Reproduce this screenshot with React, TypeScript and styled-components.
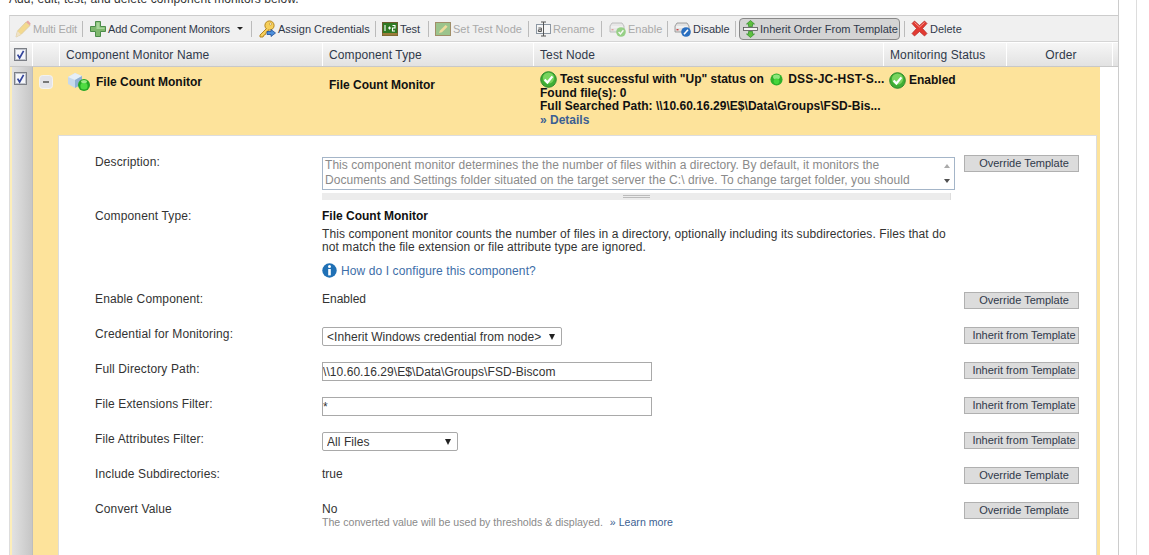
import React from 'react';
import styled, { createGlobalStyle } from 'styled-components';

const GlobalStyle = createGlobalStyle`
  html, body {
    margin: 0;
    padding: 0;
    height: 555px;
    overflow: hidden;
    background: #fff;
    font-family: "Liberation Sans", Arial, sans-serif;
    font-size: 12px;
    color: #222;
  }
`;

const Page = styled.div`
  width: 1149px;
  height: 555px;
  overflow: hidden;
  display: flex;
  box-sizing: border-box;
`;

const Main = styled.div`
  width: 1119px;
  padding-left: 9px;
  box-sizing: border-box;
  border-right: 1px solid #ccc;
  flex: none;
`;

const Aside = styled.div`
  width: 18px;
  box-sizing: border-box;
  border-right: 1px solid #ddd;
  flex: none;
`;

const Intro = styled.div`
  height: 15px;
  margin-top: -8px;
  line-height: 14px;
  font-size: 12px;
  letter-spacing: 0.08px;
  color: #333;
`;

const Panel = styled.div`
  margin-top: 8px;
  border-top: 1px solid #ccc;
  border-left: 1px solid #ddd;
  box-sizing: border-box;
`;

const Toolbar = styled.div`
  height: 26px;
  box-sizing: border-box;
  background: #f0f0f0;
  border-bottom: 1px solid #d5d5d5;
  display: flex;
  align-items: center;
  padding-left: 5px;
  font-size: 11px;
`;

const ToolItem = styled.div<{ $off?: boolean; $w: number }>`
  display: flex;
  align-items: center;
  gap: 2px;
  width: ${p => p.$w}px;
  flex: none;
  color: ${p => (p.$off ? '#a9a9a9' : '#30394a')};
  white-space: nowrap;
`;

const ToolButton = styled.div`
  display: flex;
  align-items: center;
  gap: 2px;
  width: 161px;
  height: 22px;
  box-sizing: border-box;
  flex: none;
  padding-left: 3px;
  border: 1px solid #888;
  border-radius: 4px;
  background: #d4d4d4;
  color: #30394a;
  white-space: nowrap;
`;

const ToolSep = styled.div<{ $l: number; $r: number }>`
  width: 1px;
  height: 16px;
  background: #bbb;
  flex: none;
  margin: 0 ${p => p.$r}px 0 ${p => p.$l}px;
`;

const TightLabel = styled.span`
  letter-spacing: -0.13px;
`;

const Caret = styled.span`
  width: 0;
  height: 0;
  margin-left: 5px;
  border-left: 3px solid transparent;
  border-right: 3px solid transparent;
  border-top: 3px solid #222;
`;

const HeaderRow = styled.div`
  height: 24px;
  box-sizing: border-box;
  display: flex;
  margin-top: 1px;
  background: linear-gradient(#f6f6f6, #e2e2e2);
  border-bottom: 1px solid #c8c8c8;
`;

const HeadCell = styled.div<{ $w: number; $center?: boolean }>`
  width: ${p => p.$w}px;
  flex: none;
  box-sizing: border-box;
  display: flex;
  align-items: center;
  justify-content: ${p => (p.$center ? 'center' : 'flex-start')};
  padding-left: ${p => (p.$center ? 3 : 6)}px;
  border-right: 1px solid #fff;
  color: #30394a;
  letter-spacing: 0.12px;
`;

const CheckHeadCell = styled(HeadCell)`
  padding-left: 4px;
`;

const RowBody = styled.div`
  display: flex;
  height: 488px;
`;

const SideCell = styled.div`
  width: 23px;
  flex: none;
  box-sizing: border-box;
  padding: 5px 0 0 2px;
  border-left: 2px solid #fdeeb9;
  border-right: 1px solid #bdbdbd;
  background: linear-gradient(to right, #e2e2e2, #c6c6c6);
`;

const YellowArea = styled.div`
  width: 1067px;
  flex: none;
  background: #fde39b;
  display: flex;
  flex-direction: column;
`;

const Summary = styled.div`
  height: 68px;
  flex: none;
  display: flex;
  color: #111;
`;

const Cell = styled.div<{ $w: number }>`
  width: ${p => p.$w}px;
  flex: none;
  box-sizing: border-box;
`;

const ExpandCell = styled(Cell)`
  padding: 8px 0 0 6px;
`;

const NameCell = styled(Cell)`
  display: flex;
  align-items: flex-start;
  padding: 6px 0 0 7px;
  gap: 5px;
  font-weight: bold;
  line-height: 18px;
`;

const TypeCell = styled(Cell)`
  padding: 11px 0 0 6px;
  font-weight: bold;
  line-height: 14px;
`;

const NodeCell = styled(Cell)`
  padding: 5px 0 0 6px;
  font-weight: bold;
  line-height: 13px;
`;

const StatusCell = styled(Cell)`
  display: flex;
  gap: 3px;
  padding: 5px 0 0 5px;
  font-weight: bold;
  line-height: 17px;
`;

const NodeLine = styled.div`
  display: flex;
  align-items: center;
  gap: 3px;
  height: 15px;
  white-space: pre;
`;

const NodeName = styled.span`
  margin-left: 2px;
  letter-spacing: 0.2px;
`;

const NodeText = styled.div`
  white-space: nowrap;
  letter-spacing: 0.03px;
`;

const DetailsLink = styled.div`
  color: #3c5f93;
  margin-top: 1px;
`;

const DetailPanel = styled.div`
  margin-left: 25px;
  width: 1039px;
  flex: 1;
  box-sizing: border-box;
  background: #fff;
  border: 1px solid #ddd;
  border-bottom: none;
  padding: 13px 0 0 36px;
  color: #333;
`;

const FormRow = styled.div<{ $h: number }>`
  display: grid;
  grid-template-columns: 227px 642px 115px;
  align-items: start;
  height: ${p => p.$h}px;
`;

const Label = styled.div`
  line-height: 14px;
  padding-top: 6px;
  letter-spacing: 0.13px;
`;

const PlainValue = styled.div`
  line-height: 14px;
  padding-top: 6px;
`;

const OverrideButton = styled.button`
  width: 115px;
  height: 17px;
  margin-top: 6px;
  padding: 0 0 2px 5px;
  box-sizing: border-box;
  background: #dcdcdc;
  border: 1px solid #b0b0b0;
  font: 11px "Liberation Sans", Arial, sans-serif;
  color: #30394a;
  text-align: center;
  white-space: nowrap;
`;

const DescriptionBox = styled.div`
  width: 633px;
  height: 33px;
  box-sizing: border-box;
  border: 1px solid #a4b5c8;
  display: flex;
  margin-top: 8px;
`;

const DescriptionText = styled.div`
  flex: 1;
  padding: 0 0 0 2px;
  color: #8a8a8a;
  line-height: 15px;
  letter-spacing: 0.06px;
  overflow: hidden;
`;

const ScrollColumn = styled.div`
  width: 15px;
  flex: none;
  display: flex;
  flex-direction: column;
  align-items: center;
  justify-content: space-between;
  padding: 6px 0 6px;
  box-sizing: border-box;
`;

const ScrollUp = styled.span`
  border-left: 3px solid transparent;
  border-right: 3px solid transparent;
  border-bottom: 4px solid #aaa;
`;

const ScrollDown = styled.span`
  border-left: 3px solid transparent;
  border-right: 3px solid transparent;
  border-top: 4px solid #505050;
`;

const Resizer = styled.div`
  width: 629px;
  height: 7px;
  margin-top: 3px;
  background: #ececec;
  border-right: 1px solid #ddd;
  box-sizing: border-box;
  display: flex;
  align-items: center;
  justify-content: center;
`;

const Grip = styled.div`
  width: 27px;
  height: 3px;
  border-top: 1px solid #bbb;
  border-bottom: 1px solid #bbb;
  box-sizing: border-box;
`;

const TypeTitle = styled.div`
  font-weight: bold;
  color: #111;
  line-height: 14px;
  padding-top: 6px;
`;

const TypeText = styled.div`
  margin-top: 5px;
  width: 630px;
  line-height: 13px;
  letter-spacing: 0.08px;
  color: #333;
`;

const HelpLink = styled.div`
  margin-top: 9px;
  display: flex;
  align-items: center;
  gap: 4px;
  color: #3d6ea8;
  line-height: 14px;
  letter-spacing: 0.1px;
`;

const SelectWrap = styled.div<{ $w: number }>`
  position: relative;
  width: ${p => p.$w}px;
  height: 19px;
  margin-top: 6px;
`;

const Select = styled.select`
  appearance: none;
  width: 100%;
  height: 100%;
  box-sizing: border-box;
  padding: 0 0 0 4px;
  border: 1px solid #a9a9a9;
  border-radius: 2px;
  background: #fff;
  font: 12px "Liberation Sans", Arial, sans-serif;
  letter-spacing: 0.06px;
  color: #333;
`;

const SelectArrow = styled.span`
  position: absolute;
  right: 7px;
  top: 7px;
  border-left: 3px solid transparent;
  border-right: 3px solid transparent;
  border-top: 6px solid #222;
`;

const TextInput = styled.input`
  width: 330px;
  height: 19px;
  margin-top: 6px;
  box-sizing: border-box;
  padding: 0;
  border: 1px solid #a9a9a9;
  outline: none;
  font: 12px "Liberation Sans", Arial, sans-serif;
  letter-spacing: 0.06px;
  color: #333;
`;

const Note = styled.div`
  font-size: 10.6px;
  color: #8a8a8a;
  line-height: 13px;
  white-space: nowrap;
`;

const NoteLink = styled.span`
  color: #3c5f93;
  margin-left: 4px;
`;

const CheckIcon = () => (
  <svg width="13" height="13" viewBox="0 0 13 13" style={{ display: 'block' }}>
    <rect x="0.5" y="0.5" width="12" height="12" fill="#e9ebf0" stroke="#7c7f86" />
    <rect x="1.5" y="1.5" width="10" height="10" fill="#f6f7fa" stroke="#c0c4cc" />
    <path d="M3.6 6.6 L5.6 10 L9.6 2.8" fill="none" stroke="#33459c" strokeWidth="1.7" />
  </svg>
);

const MinusIcon = () => (
  <svg width="14" height="14" viewBox="0 0 14 14" style={{ display: 'block' }}>
    <rect x="0.5" y="0.5" width="13" height="13" rx="3" fill="#e4e4e8" stroke="#f2f2f2" />
    <rect x="4" y="6" width="6" height="2" fill="#777" />
  </svg>
);

const GreenCheck = () => (
  <svg width="17" height="17" viewBox="0 0 17 17" style={{ flex: 'none' }}>
    <circle cx="8.5" cy="8.5" r="7.8" fill="#3fae34" stroke="#2b8a2c" />
    <circle cx="8.5" cy="7" r="5.6" fill="#79d45f" />
    <path d="M4.6 8.5 L7.4 11.5 L12.4 5.4" fill="none" stroke="#fff" strokeWidth="2.2" />
  </svg>
);

const GreenBall = () => (
  <svg width="13" height="13" viewBox="0 0 12 12" style={{ flex: 'none' }}>
    <circle cx="6" cy="6" r="5.6" fill="#2fb12c" />
    <ellipse cx="6" cy="3.6" rx="3.2" ry="2.2" fill="#8fe67c" />
    <circle cx="6" cy="7.6" r="2.6" fill="#45d63a" />
  </svg>
);

const MonitorIcon = () => (
  <svg width="24" height="20" viewBox="0 0 24 20" style={{ flex: 'none', marginTop: -1 }}>
    <path d="M1 5 L8 1 L15 4 L15 12 L8 16 L1 12 Z" fill="#c6d9ec" />
    <path d="M1 5 L8 1 L15 4 L8 8 Z" fill="#e6eff8" />
    <path d="M8 8 L15 4 L15 12 L8 16 Z" fill="#8fb0d2" />
    <circle cx="17" cy="13" r="6" fill="#24a724" />
    <circle cx="17" cy="14" r="3.6" fill="#4fdc42" />
    <ellipse cx="17" cy="9.6" rx="3" ry="1.6" fill="#9bea87" />
  </svg>
);

const InfoIcon = () => (
  <svg width="15" height="15" viewBox="0 0 15 15" style={{ flex: 'none' }}>
    <circle cx="7.5" cy="7.5" r="7.2" fill="#1f70b5" />
    <circle cx="7.5" cy="3.6" r="1.5" fill="#fff" />
    <rect x="6.2" y="6" width="2.6" height="6.4" fill="#fff" />
  </svg>
);

const PencilIcon = () => (
  <svg width="16" height="18" viewBox="0 0 16 18" style={{ flex: 'none' }}>
    <path d="M1 17 L2.5 11 L11 2 L15 5.5 L6 14.5 Z" fill="#f3d98e" stroke="#d8c8a0" strokeWidth="0.8" />
    <path d="M11 2 L13 0.6 L15.6 3.4 L15 5.5 Z" fill="#e8a6a0" />
    <path d="M1 17 L2.5 11 L6 14.5 Z" fill="#efe2c6" />
  </svg>
);

const PlusIcon = () => (
  <svg width="16" height="16" viewBox="0 0 16 16" style={{ flex: 'none' }}>
    <path d="M5.5 0.5 H10.5 V5.5 H15.5 V10.5 H10.5 V15.5 H5.5 V10.5 H0.5 V5.5 H5.5 Z" fill="#7fb86e" stroke="#4c8c4a" />
    <path d="M6.5 1.5 H9.5 V6.5 H14.5 V8 H6.5 Z" fill="#a8d59a" />
  </svg>
);

const KeyIcon = () => (
  <svg width="17" height="18" viewBox="0 0 17 18" style={{ flex: 'none' }}>
    <circle cx="10.5" cy="5.5" r="4.6" fill="#f6cf5a" stroke="#b5851f" />
    <circle cx="11.5" cy="4" r="1.1" fill="#fff" stroke="#b5851f" strokeWidth="0.6" />
    <path d="M7.5 8.5 L1 15 L1 17 L4 17 L5 15 L6.5 14.5 L7 12.5 L10 9.8" fill="#f6cf5a" stroke="#b5851f" />
    <path d="M8 11.5 H12 V9.5 L16.5 13 L12 16.5 V14.5 H8 Z" fill="#4c8fdc" stroke="#1f4f96" strokeWidth="0.8" />
  </svg>
);

const BoardIcon = () => (
  <svg width="16" height="14" viewBox="0 0 16 14" style={{ flex: 'none' }}>
    <rect x="0.5" y="0.5" width="15" height="13" fill="#2f7a22" stroke="#6b5a2c" />
    <rect x="0.5" y="11" width="15" height="2.5" fill="#9c7c3a" />
    <path d="M3 3 V9 M6 6 H9 M7.5 4.5 V7.5 M10.5 3.5 H13 V6 H10.5 V9 H13" fill="none" stroke="#fff" strokeWidth="1.1" />
  </svg>
);

const SetNodeIcon = () => (
  <svg width="16" height="14" viewBox="0 0 16 14" style={{ flex: 'none' }}>
    <rect x="0.5" y="0.5" width="15" height="13" fill="#9cc48c" stroke="#a08e68" />
    <path d="M4 11 L5 8.4 L10.6 3 L12.6 4.8 L7 10.2 Z" fill="#f0dc9c" />
  </svg>
);

const RenameIcon = () => (
  <svg width="15" height="16" viewBox="0 0 15 16" style={{ flex: 'none' }}>
    <rect x="0.5" y="3.5" width="14" height="9" fill="#f5f5f5" stroke="#8c97a3" />
    <path d="M7.5 1 V15 M5 1 H10 M5 15 H10" stroke="#555" fill="none" />
    <path d="M2.4 7 H5.4 V10.5 H2.4 V8.8 H5" stroke="#555" fill="none" />
  </svg>
);

const ServerIcon = ({ enable }: { enable?: boolean }) => (
  <svg width="17" height="16" viewBox="0 0 17 16" style={{ flex: 'none', opacity: enable ? 0.6 : 1 }}>
    <path d="M1 5 L3 2 H13 L15 5 V11 H1 Z" fill="#e2e2e2" stroke="#8c8c8c" strokeWidth="0.8" />
    <rect x="2" y="5.5" width="12" height="1" fill="#fff" />
    <rect x="2.5" y="8" width="2" height="1.4" fill={enable ? '#d86a6a' : '#c44'} />
    {enable ? (
      <>
        <circle cx="12" cy="11" r="4.8" fill="#5cbb40" />
        <path d="M9.6 11 L11.4 13 L14.4 9.2" fill="none" stroke="#fff" strokeWidth="1.4" />
      </>
    ) : (
      <>
        <circle cx="12" cy="11" r="4.8" fill="#2a6fc0" />
        <path d="M10 13.2 L14 8.8" fill="none" stroke="#fff" strokeWidth="1.6" />
      </>
    )}
  </svg>
);

const OrderIcon = () => (
  <svg width="15" height="18" viewBox="0 0 15 18" style={{ flex: 'none' }}>
    <path d="M7.5 0.5 L11.5 4 H9.5 V6.5 H5.5 V4 H3.5 Z" fill="#5fc03f" stroke="#2f8a2a" strokeWidth="0.7" />
    <path d="M7.5 17.5 L11.5 14 H9.5 V11.5 H5.5 V14 H3.5 Z" fill="#5fc03f" stroke="#2f8a2a" strokeWidth="0.7" />
    <rect x="0.5" y="7.5" width="14" height="3" fill="#f4f4f4" stroke="#555" strokeWidth="0.8" />
  </svg>
);

const DeleteIcon = () => (
  <svg width="17" height="17" viewBox="0 0 17 17" style={{ flex: 'none' }}>
    <path d="M1 3.5 L3.5 1 L8.5 5.5 L13.5 1 L16 3.5 L11.5 8.5 L16 13.5 L13.5 16 L8.5 11.5 L3.5 16 L1 13.5 L5.5 8.5 Z" fill="#e23a32" stroke="#b02a26" strokeWidth="0.7" />
    <path d="M3.5 2.5 L8.5 7 L13.5 2.5" fill="none" stroke="#f79a90" />
  </svg>
);

const App = () => {
  return (
    <Page>
      <GlobalStyle />
      <Main>
        <Intro>Add, edit, test, and delete component monitors below.</Intro>
        <Panel>
          <Toolbar>
            <ToolItem $off $w={67}><PencilIcon /><TightLabel>Multi Edit</TightLabel></ToolItem>
            <ToolSep $l={0} $r={7} />
            <ToolItem $w={161}><PlusIcon /><TightLabel>Add Component Monitors</TightLabel><Caret /></ToolItem>
            <ToolSep $l={0} $r={7} />
            <ToolItem $w={116}><KeyIcon />Assign Credentials</ToolItem>
            <ToolSep $l={0} $r={6} />
            <ToolItem $w={46}><BoardIcon />Test</ToolItem>
            <ToolSep $l={0} $r={6} />
            <ToolItem $off $w={93}><SetNodeIcon />Set Test Node</ToolItem>
            <ToolSep $l={0} $r={7} />
            <ToolItem $off $w={65}><RenameIcon />Rename</ToolItem>
            <ToolSep $l={0} $r={7} />
            <ToolItem $off $w={58}><ServerIcon enable />Enable</ToolItem>
            <ToolSep $l={0} $r={6} />
            <ToolItem $w={61}><ServerIcon />Disable</ToolItem>
            <ToolSep $l={0} $r={3} />
            <ToolButton><OrderIcon />Inherit Order From Template</ToolButton>
            <ToolSep $l={4} $r={6} />
            <ToolItem $w={60}><DeleteIcon />Delete</ToolItem>
          </Toolbar>
          <HeaderRow>
            <CheckHeadCell $w={23}><CheckIcon /></CheckHeadCell>
            <HeadCell $w={27} />
            <HeadCell $w={263}>Component Monitor Name</HeadCell>
            <HeadCell $w={211}>Component Type</HeadCell>
            <HeadCell $w={350}>Test Node</HeadCell>
            <HeadCell $w={123}>Monitoring Status</HeadCell>
            <HeadCell $w={106} $center>Order</HeadCell>
          </HeaderRow>
          <RowBody>
            <SideCell><CheckIcon /></SideCell>
            <YellowArea>
              <Summary>
                <ExpandCell $w={27}><MinusIcon /></ExpandCell>
                <NameCell $w={263}><MonitorIcon />File Count Monitor</NameCell>
                <TypeCell $w={211}>File Count Monitor</TypeCell>
                <NodeCell $w={350}>
                  <NodeLine><GreenCheck />Test successful with "Up" status on <GreenBall /><NodeName>DSS-JC-HST-S...</NodeName></NodeLine>
                  <NodeText>Found file(s): 0</NodeText>
                  <NodeText>Full Searched Path: \\10.60.16.29\E$\Data\Groups\FSD-Bis...</NodeText>
                  <DetailsLink>» Details</DetailsLink>
                </NodeCell>
                <StatusCell $w={123}><GreenCheck />Enabled</StatusCell>
              </Summary>
              <DetailPanel>
                <FormRow $h={54}>
                  <Label>Description:</Label>
                  <div>
                    <DescriptionBox>
                      <DescriptionText>
                        This component monitor determines the the number of files within a directory. By default, it monitors the Documents and Settings folder situated on the target server the C:\ drive. To change target folder, you should
                      </DescriptionText>
                      <ScrollColumn><ScrollUp /><ScrollDown /></ScrollColumn>
                    </DescriptionBox>
                    <Resizer><Grip /></Resizer>
                  </div>
                  <OverrideButton>Override Template</OverrideButton>
                </FormRow>
                <FormRow $h={83}>
                  <Label>Component Type:</Label>
                  <div>
                    <TypeTitle>File Count Monitor</TypeTitle>
                    <TypeText>This component monitor counts the number of files in a directory, optionally including its subdirectories. Files that do not match the file extension or file attribute type are ignored.</TypeText>
                    <HelpLink><InfoIcon />How do I configure this component?</HelpLink>
                  </div>
                </FormRow>
                <FormRow $h={35}>
                  <Label>Enable Component:</Label>
                  <PlainValue>Enabled</PlainValue>
                  <OverrideButton>Override Template</OverrideButton>
                </FormRow>
                <FormRow $h={35}>
                  <Label>Credential for Monitoring:</Label>
                  <SelectWrap $w={240}>
                    <Select defaultValue="inherit">
                      <option value="inherit">&lt;Inherit Windows credential from node&gt;</option>
                    </Select>
                    <SelectArrow />
                  </SelectWrap>
                  <OverrideButton>Inherit from Template</OverrideButton>
                </FormRow>
                <FormRow $h={35}>
                  <Label>Full Directory Path:</Label>
                  <TextInput readOnly defaultValue="\\10.60.16.29\E$\Data\Groups\FSD-Biscom" />
                  <OverrideButton>Inherit from Template</OverrideButton>
                </FormRow>
                <FormRow $h={35}>
                  <Label>File Extensions Filter:</Label>
                  <TextInput readOnly defaultValue="*" />
                  <OverrideButton>Inherit from Template</OverrideButton>
                </FormRow>
                <FormRow $h={35}>
                  <Label>File Attributes Filter:</Label>
                  <SelectWrap $w={136}>
                    <Select defaultValue="all">
                      <option value="all">All Files</option>
                    </Select>
                    <SelectArrow />
                  </SelectWrap>
                  <OverrideButton>Inherit from Template</OverrideButton>
                </FormRow>
                <FormRow $h={35}>
                  <Label>Include Subdirectories:</Label>
                  <PlainValue>true</PlainValue>
                  <OverrideButton>Override Template</OverrideButton>
                </FormRow>
                <FormRow $h={35}>
                  <Label>Convert Value</Label>
                  <PlainValue>
                    No
                    <Note>The converted value will be used by thresholds &amp; displayed. <NoteLink>» Learn more</NoteLink></Note>
                  </PlainValue>
                  <OverrideButton>Override Template</OverrideButton>
                </FormRow>
              </DetailPanel>
            </YellowArea>
          </RowBody>
        </Panel>
      </Main>
      <Aside />
    </Page>
  );
};

export default App;
